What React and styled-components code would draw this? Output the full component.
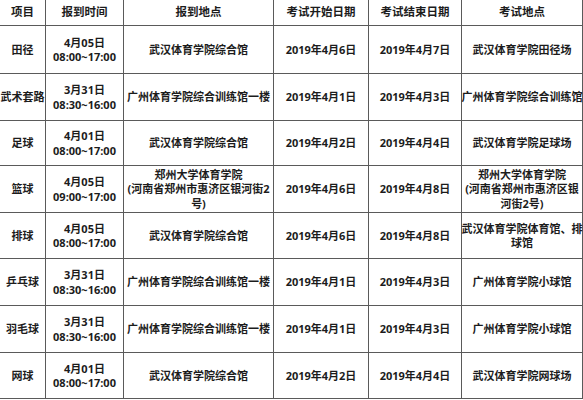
import React from 'react';
import styled, { createGlobalStyle } from 'styled-components';

const GlobalStyle = createGlobalStyle`
  html, body {
    margin: 0;
    padding: 0;
    background: #ffffff;
  }
  body {
    font-family: "Open Sans", "Noto Sans CJK SC", sans-serif;
  }
`;

const Table = styled.div`
  display: grid;
  grid-template-columns: 46px 78px 150px 95px 93px 121px;
  grid-template-rows: 26px 48px 47px 45px 47px 46px 47px 47px 46px;
  width: 583px;
  background: #fff;
  color: #1c1c1c;
`;

const Row = styled.div`
  display: contents;
`;

const Cell = styled.div`
  box-sizing: border-box;
  border-right: 1px solid #5a5a5a;
  border-bottom: 1px solid #5a5a5a;
  display: flex;
  flex-direction: column;
  align-items: center;
  justify-content: center;
  text-align: center;
  font-weight: 700;
  font-size: ${({ head }) => (head ? '11.5px' : '11px')};
  line-height: 14.5px;
  padding-top: ${({ head }) => (head ? '0' : '1px')};
`;

const Line = styled.span`
  display: block;
  white-space: nowrap;
`;

const head = ['项目', '报到时间', '报到地点', '考试开始日期', '考试结束日期', '考试地点'];

const rows = [
  ['田径', ['4月05日', '08:00~17:00'], ['武汉体育学院综合馆'], '2019年4月6日', '2019年4月7日', ['武汉体育学院田径场']],
  ['武术套路', ['3月31日', '08:30~16:00'], ['广州体育学院综合训练馆一楼'], '2019年4月1日', '2019年4月3日', ['广州体育学院综合训练馆']],
  ['足球', ['4月01日', '08:00~17:00'], ['武汉体育学院综合馆'], '2019年4月2日', '2019年4月4日', ['武汉体育学院足球场']],
  ['篮球', ['4月05日', '09:00~17:00'], ['郑州大学体育学院', '(河南省郑州市惠济区银河街2', '号)'], '2019年4月6日', '2019年4月8日', ['郑州大学体育学院', '(河南省郑州市惠济区银', '河街2号)']],
  ['排球', ['4月05日', '08:00~17:00'], ['武汉体育学院综合馆'], '2019年4月6日', '2019年4月8日', ['武汉体育学院体育馆、排', '球馆']],
  ['乒乓球', ['3月31日', '08:30~16:00'], ['广州体育学院综合训练馆一楼'], '2019年4月1日', '2019年4月3日', ['广州体育学院小球馆']],
  ['羽毛球', ['3月31日', '08:30~16:00'], ['广州体育学院综合训练馆一楼'], '2019年4月1日', '2019年4月3日', ['广州体育学院小球馆']],
  ['网球', ['4月01日', '08:00~17:00'], ['武汉体育学院综合馆'], '2019年4月2日', '2019年4月4日', ['武汉体育学院网球场']],
];

const renderLines = (value) =>
  (Array.isArray(value) ? value : [value]).map((t, i) => <Line key={i}>{t}</Line>);

export default function App() {
  return (
    <>
      <GlobalStyle />
      <Table>
        <Row>
          {head.map((h) => (
            <Cell head key={h}>{h}</Cell>
          ))}
        </Row>
        {rows.map((r) => (
          <Row key={r[0]}>
            {r.map((c, i) => (
              <Cell key={i}>{renderLines(c)}</Cell>
            ))}
          </Row>
        ))}
      </Table>
    </>
  );
}
